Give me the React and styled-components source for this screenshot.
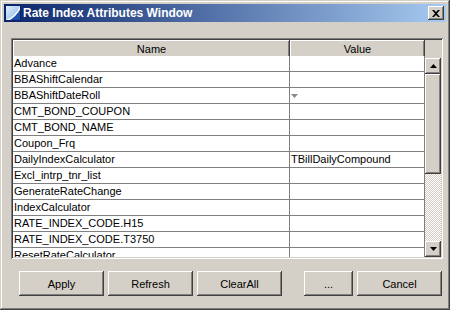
import React from 'react';
import styled, { createGlobalStyle } from 'styled-components';

const GlobalStyle = createGlobalStyle`
  html, body { margin: 0; padding: 0; background: #d4d0c8; }
  * { box-sizing: border-box; }
`;

const FONT = `"Liberation Sans", Arial, sans-serif`;

const rows = [
  { name: 'Advance' },
  { name: 'BBAShiftCalendar' },
  { name: 'BBAShiftDateRoll', dropdown: true },
  { name: 'CMT_BOND_COUPON' },
  { name: 'CMT_BOND_NAME' },
  { name: 'Coupon_Frq' },
  { name: 'DailyIndexCalculator', value: 'TBillDailyCompound' },
  { name: 'Excl_intrp_tnr_list' },
  { name: 'GenerateRateChange' },
  { name: 'IndexCalculator' },
  { name: 'RATE_INDEX_CODE.H15' },
  { name: 'RATE_INDEX_CODE.T3750' },
  { name: 'ResetRateCalculator' },
];

const raised = `
  box-shadow: inset -1px -1px #404040, inset 1px 1px #ffffff,
    inset -2px -2px #808080, inset 2px 2px #d4d0c8;
`;

const Window = styled.div`
  width: 450px;
  height: 310px;
  padding: 4px;
  background: #d4d0c8;
  font-family: ${FONT};
  font-size: 11px;
  color: #000;
  display: flex;
  flex-direction: column;
  box-shadow: inset -1px -1px #404040, inset 1px 1px #d4d0c8,
    inset -2px -2px #808080, inset 2px 2px #ffffff;
`;

const TitleBar = styled.div`
  height: 18px;
  display: flex;
  align-items: center;
  padding: 0 2px 0 1px;
  background: linear-gradient(to right, #0a246a, #a6caf0);
`;

const Title = styled.div`
  flex: 1;
  margin-left: 2px;
  color: #fff;
  font-weight: bold;
  font-size: 12px;
  white-space: nowrap;
`;

const CloseButton = styled.div`
  width: 16px;
  height: 14px;
  display: flex;
  align-items: center;
  justify-content: center;
  background: #d4d0c8;
  ${raised}
`;

const Frame = styled.div`
  margin: 16px 3px 0 7px;
  height: 221px;
  padding: 2px;
  display: flex;
  background: #d4d0c8;
  box-shadow: inset 1px 1px #808080, inset -1px -1px #ffffff,
    inset 2px 2px #404040, inset -2px -2px #d4d0c8;
`;

const Table = styled.div`
  display: grid;
  grid-template-columns: 277px 135px;
  grid-auto-rows: 16px;
  align-content: start;
  overflow: hidden;
  height: 217px;
`;

const HeadCell = styled.div`
  height: 18px;
  display: flex;
  align-items: center;
  justify-content: center;
  padding-bottom: 1px;
  background: #d4d0c8;
  ${raised}
`;

const Cell = styled.div`
  background: #fff;
  border-right: 1px solid #808080;
  border-bottom: 1px solid #808080;
  padding-left: 1px;
  display: flex;
  align-items: center;
  white-space: nowrap;
  line-height: 15px;
`;

const ScrollColumn = styled.div`
  width: 16px;
  display: flex;
  flex-direction: column;
  padding-top: 18px;
`;

const ScrollButton = styled.div`
  width: 16px;
  height: ${(p) => p.h || 16}px;
  display: flex;
  align-items: center;
  justify-content: center;
  background: #d4d0c8;
  ${raised}
`;

const Track = styled.div`
  flex: 1;
  background: repeating-conic-gradient(#ffffff 0 25%, #d4d0c8 0 50%) 0 0 / 2px 2px;
`;

const ButtonRow = styled.div`
  display: flex;
  gap: 4px;
  margin: 12px 0 0 15px;
`;

const Button = styled.div`
  width: ${(p) => p.w}px;
  height: 25px;
  margin-left: ${(p) => p.gapBefore || 0}px;
  display: flex;
  align-items: center;
  justify-content: center;
  background: #d4d0c8;
  ${raised}
`;

const Arrow = ({ up, color = '#000' }) => (
  <svg width="7" height="4" viewBox="0 0 7 4">
    {up ? (
      <polygon points="3.5,0 7,4 0,4" fill={color} />
    ) : (
      <polygon points="0,0 7,0 3.5,4" fill={color} />
    )}
  </svg>
);

const AppIcon = () => (
  <svg width="16" height="16" viewBox="0 0 16 16">
    <defs>
      <linearGradient id="ig" x1="0" y1="0" x2="1" y2="1">
        <stop offset="0" stopColor="#e8f2ff" />
        <stop offset="1" stopColor="#7fb0e8" />
      </linearGradient>
    </defs>
    <rect x="0" y="0" width="16" height="16" fill="url(#ig)" />
    <path d="M16 1 L16 16 L1 16 Q11 12 16 1 Z" fill="#1d4fa8" />
    <path d="M1 16 Q11 12 16 1" stroke="#fff" strokeWidth="1.5" fill="none" />
    <rect x="0.5" y="0.5" width="15" height="15" fill="none" stroke="#0a246a" strokeWidth="1" />
  </svg>
);

export default function App() {
  return (
    <>
      <GlobalStyle />
      <Window>
        <TitleBar>
          <AppIcon />
          <Title>Rate Index Attributes Window</Title>
          <CloseButton>
            <svg width="8" height="7" viewBox="0 0 8 7">
              <path d="M0 0 L2 0 L4 2 L6 0 L8 0 L5 3.5 L8 7 L6 7 L4 5 L2 7 L0 7 L3 3.5 Z" fill="#000" />
            </svg>
          </CloseButton>
        </TitleBar>
        <Frame>
          <Table>
            <HeadCell>Name</HeadCell>
            <HeadCell>Value</HeadCell>
            {rows.map((r) => (
              <React.Fragment key={r.name}>
                <Cell>{r.name}</Cell>
                <Cell>
                  {r.value}
                  {r.dropdown && <Arrow color="#8a8a8a" />}
                </Cell>
              </React.Fragment>
            ))}
          </Table>
          <ScrollColumn>
            <ScrollButton>
              <Arrow up />
            </ScrollButton>
            <ScrollButton h={100} />
            <Track />
            <ScrollButton>
              <Arrow />
            </ScrollButton>
          </ScrollColumn>
        </Frame>
        <ButtonRow>
          <Button w={85}>Apply</Button>
          <Button w={85}>Refresh</Button>
          <Button w={85}>ClearAll</Button>
          <Button w={49} gapBefore={18}>...</Button>
          <Button w={85}>Cancel</Button>
        </ButtonRow>
      </Window>
    </>
  );
}
